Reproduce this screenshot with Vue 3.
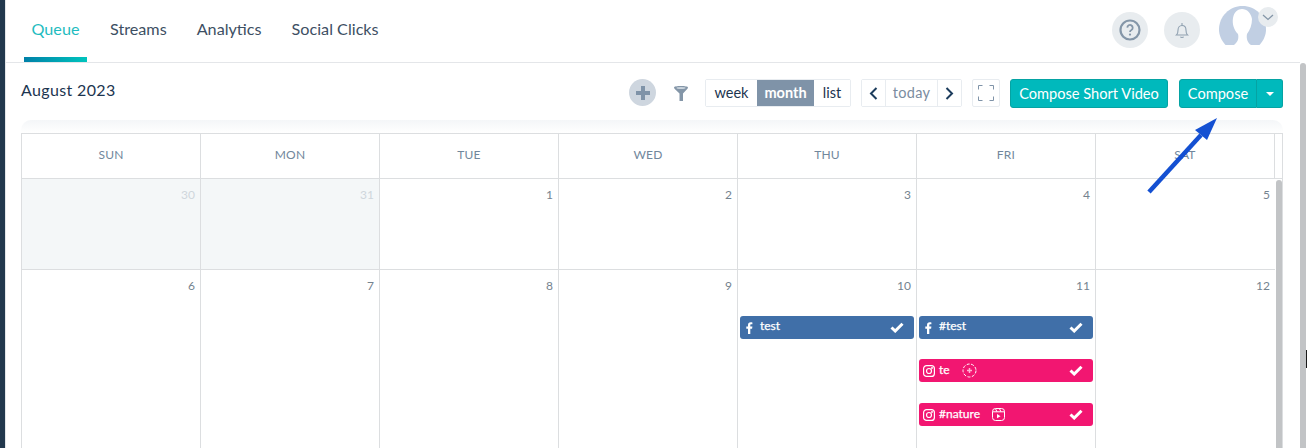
<script setup>
const heads = ['SUN', 'MON', 'TUE', 'WED', 'THU', 'FRI', 'SAT']
const weeks = [
  [
    { n: 30, off: true }, { n: 31, off: true }, { n: 1 }, { n: 2 }, { n: 3 }, { n: 4 }, { n: 5 },
  ],
  [
    { n: 6 }, { n: 7 }, { n: 8 }, { n: 9 },
    { n: 10, events: [{ kind: 'fb', label: 'test' }] },
    { n: 11, events: [
      { kind: 'fb', label: '#test' },
      { kind: 'ig', label: 'te', extra: 'story' },
      { kind: 'ig', label: '#nature', extra: 'reel' },
    ] },
    { n: 12 },
  ],
]
</script>

<template>
  <div class="page">
    <div class="rail"></div>
    <div class="main">
      <header class="topbar">
        <nav class="tabs">
          <a class="tab active">Queue</a>
          <a class="tab">Streams</a>
          <a class="tab">Analytics</a>
          <a class="tab">Social Clicks</a>
        </nav>
        <div class="user">
          <span class="round">
            <svg width="22" height="22" viewBox="0 0 22 22" fill="none" stroke="#8496a8" stroke-width="2.200">
              <circle cx="11" cy="11" r="9.500" />
              <path d="M8.300 8.600a2.700 2.700 0 1 1 4.100 2.400c-.9.500-1.400 1-1.400 2" stroke-width="1.800" />
              <circle cx="11" cy="15.600" r=".6" stroke-width="1.100" />
            </svg>
          </span>
          <span class="round">
            <svg width="14" height="17" viewBox="0 0 14 17" fill="none" stroke="#8fa0b0" stroke-width="1.100">
              <path d="M1.500 13c1.200-1 1.500-2.200 1.500-4.800C3 5.500 4.600 3.500 7 3.500s4 2 4 4.700c0 2.600.3 3.800 1.500 4.800z" />
              <path d="M7 1v2.500M5.400 14.800c.5.900 2.700.9 3.200 0" />
            </svg>
          </span>
          <span class="avatar">
            <svg width="47" height="39" viewBox="0 0 47 39">
              <path d="M6.500 39C2.500 34.500 0 29.500 0 23.500 0 10.500 10.500 0 23.500 0S47 10.500 47 23.500c0 6-2.500 11-6.500 15.500z" fill="#c1cfe3" />
              <path d="M15 39c4-3 5-7 4-11-4-4-6-10-5-16 1-6 5-9 9-9 5 0 9 4 10 10 0 6-2 11-5 15-1 5 1 9 4 11z" fill="#fff" />
            </svg>
            <span class="avatar-caret">
              <svg width="12" height="7" viewBox="0 0 12 7" fill="none" stroke="#8496a8" stroke-width="1.300"><path d="M1 1l5 4.500L11 1" /></svg>
            </span>
          </span>
        </div>
      </header>

      <section class="toolbar">
        <h2 class="month-title">August 2023</h2>
        <div class="tools">
          <span class="plus">
            <svg width="16" height="16" viewBox="0 0 16 16"><path d="M8 1v14M1 8h14" stroke="#7f93a8" stroke-width="4" /></svg>
          </span>
          <svg class="funnel" width="14" height="15" viewBox="0 0 14 15">
            <path d="M0 1.500C0 .5 3 0 7 0s7 .5 7 1.500c0 .5-.3 1-.8 1.400L9 7.500V15H5.500V7.500L.8 2.900C.3 2.500 0 2 0 1.500z" fill="#8496a8" />
            <ellipse cx="7" cy="2" rx="4.500" ry="1" fill="#c9d3dc" />
          </svg>
          <div class="btn-group views">
            <button class="seg seg-week">week</button>
            <button class="seg on">month</button>
            <button class="seg seg-list">list</button>
          </div>
          <div class="btn-group pager">
            <button class="seg arrow">
              <svg width="9" height="13" viewBox="0 0 9 13" fill="none" stroke="#1c3c5c" stroke-width="2"><path d="M7.500 1L2 6.500l5.500 5.500" /></svg>
            </button>
            <button class="seg today">today</button>
            <button class="seg arrow">
              <svg width="9" height="13" viewBox="0 0 9 13" fill="none" stroke="#1c3c5c" stroke-width="2"><path d="M1.500 1L7 6.500 1.500 12" /></svg>
            </button>
          </div>
          <button class="expand">
            <svg width="16" height="16" viewBox="0 0 16 16" fill="none" stroke="#7f93a8" stroke-width="1">
              <path d="M.5 4.500v-4h4M11.500.5h4v4M15.500 11.500v4h-4M4.500 15.500h-4v-4" />
            </svg>
          </button>
          <button class="teal short">Compose Short Video</button>
          <div class="split">
            <button class="teal main-act">Compose</button>
            <button class="teal caret-act"><span class="tri"></span></button>
          </div>
        </div>
      </section>

      <section class="calendar">
        <div class="shadow-strip"></div>
        <div class="cal-frame">
          <div class="cal-head">
            <div v-for="h in heads" :key="h" class="head-cell">{{ h }}</div>
            <div class="gutter"></div>
          </div>
          <div class="cal-body">
            <div class="weeks">
              <div v-for="(w, i) in weeks" :key="i" class="week">
                <div v-for="d in w" :key="d.n" class="day" :class="{ off: d.off }">
                  <div class="num">{{ d.n }}</div>
                  <div v-if="d.events" class="events">
                    <div v-for="e in d.events" :key="e.label" class="event" :class="e.kind">
                      <svg v-if="e.kind === 'fb'" class="net" width="7" height="12" viewBox="0 0 7 12"><path d="M2 12V6.700H.3V4.600H2V3.100C2 1.200 3 .3 4.700.3c.8 0 1.400.1 1.700.1v1.900h-1c-.9 0-1.100.4-1.100 1v1.300h2.100l-.3 2.100H4.300V12z" fill="#fff" /></svg>
                      <svg v-else class="net" width="12" height="12" viewBox="0 0 12 12" fill="none" stroke="#fff" stroke-width="1.200"><rect x=".6" y=".6" width="10.800" height="10.800" rx="3" /><circle cx="6" cy="6" r="2.500" /><circle cx="9" cy="3" r=".4" /></svg>
                      <span class="ev-label">{{ e.label }}</span>
                      <svg v-if="e.extra === 'story'" class="extra story" width="15" height="15" viewBox="0 0 15 15" fill="none" stroke="#fff"><circle cx="7.500" cy="7.500" r="6.500" stroke-dasharray="3 1.500" /><path d="M7.500 5v5M5 7.500h5" stroke="#ffb3d1" stroke-width="1.500" /></svg>
                      <svg v-if="e.extra === 'reel'" class="extra reel" width="13" height="13" viewBox="0 0 13 13" fill="none" stroke="#fff"><rect x=".5" y=".5" width="12" height="12" rx="3" /><path d="M.5 3.800h12M3.500.8l1.500 3M7.500.8l1.500 3" /><path d="M5 6l3.500 2.200L5 10.300z" fill="#fff" stroke="none" /></svg>
                      <svg class="check" width="14" height="11" viewBox="0 0 14 11"><path d="M1.500 5.500l3.700 3.500L12.500 1.800" fill="none" stroke="#fff" stroke-width="3" /></svg>
                    </div>
                  </div>
                </div>
              </div>
            </div>
            <div class="inner-scroll"><span class="inner-thumb"></span></div>
          </div>
        </div>
      </section>

      <svg class="pointer" width="78" height="86" viewBox="0 0 78 86">
        <path d="M3 77L55 20" stroke="#1450d2" stroke-width="4.500" fill="none" />
        <path d="M71 3L49 15 61 25z" fill="#1450d2" />
      </svg>
    </div>
    <div class="page-scroll"><span class="cursor-bit"></span></div>
  </div>
</template>

<style>
html, body { margin: 0; padding: 0; background: #fff; overflow: hidden; }
</style>

<style scoped>
.page {
  display: flex;
  width: 1307px;
  height: 448px;
  overflow: hidden;
  background: #fff;
  font-family: "Lato", "Open Sans", sans-serif;
  color: #1c3550;
}
.rail { width: 5px; background: #22384d; flex: none; }
.main {
  position: relative;
  flex: 1;
  min-width: 0;
  border-left: 1px solid #e3e6e9;
}
.topbar {
  display: flex;
  align-items: flex-start;
  justify-content: space-between;
  height: 62px;
  border-bottom: 1px solid #e4e6e9;
}
.tabs { display: flex; padding-left: 18px; }
.tab {
  position: relative;
  height: 62px;
  box-sizing: border-box;
  padding: 19px 7px 0;
  margin-right: 16px;
  font-size: 16.200px;
  line-height: 20px;
  color: #3d4f63;
}
.tab.active { color: #1fbcc0; padding-right: 7.500px; padding-left: 7.500px; }
.tab.active::after {
  content: "";
  position: absolute;
  left: 0;
  right: 0;
  bottom: 0;
  height: 5px;
  background: linear-gradient(90deg, #0080a8, #00c4bd);
}
.user {
  display: flex;
  align-items: flex-start;
  padding: 6px 34px 0 0;
}
.round {
  display: flex;
  align-items: center;
  justify-content: center;
  width: 36px;
  height: 36px;
  margin-top: 6px;
  margin-right: 16px;
  border-radius: 50%;
  background: #e8ecef;
}
.avatar { position: relative; width: 47px; height: 39px; margin-left: 3px; }
.avatar svg { display: block; }
.avatar-caret {
  position: absolute;
  right: -12px;
  top: 1px;
  display: flex;
  align-items: center;
  justify-content: center;
  width: 20px;
  height: 20px;
  border-radius: 50%;
  background: #e8ecef;
}
.toolbar {
  display: flex;
  align-items: flex-start;
  justify-content: space-between;
  height: 57px;
  padding: 0 17px 0 15px;
}
.month-title {
  margin: 17px 0 0;
  font-size: 16px;
  line-height: 20px;
  font-weight: 400;
  color: #1c3550;
  letter-spacing: .36px;
}
.tools { display: flex; align-items: flex-start; padding-top: 16px; }
.plus {
  display: flex;
  align-items: center;
  justify-content: center;
  width: 27px;
  height: 27px;
  margin-right: 18px;
  border-radius: 50%;
  background: #ced6df;
}
.funnel { margin: 7px 17px 0 0; }
.btn-group {
  display: flex;
  height: 28px;
  box-sizing: border-box;
  border: 1px solid #e8ecf0;
  border-radius: 2px;
}
.views, .pager { margin-right: 10px; }
.seg {
  padding: 0;
  border: 0;
  background: #fff;
  font: inherit;
  font-size: 14.500px;
  line-height: 26px;
  color: #1c3550;
}
.seg-week { width: 51px; }
.seg-list { width: 36px; }
.seg.on { width: 57px; background: #7f93a8; color: #fff; font-weight: 700; }
.seg.arrow {
  display: flex;
  align-items: center;
  justify-content: center;
  width: 23px;
}
.seg.today {
  width: 53px;
  color: #7a8ca0;
  border-left: 1px solid #e8ecf0;
  border-right: 1px solid #e8ecf0;
  letter-spacing: .3px;
}
.expand {
  display: flex;
  align-items: center;
  justify-content: center;
  width: 28px;
  height: 28px;
  margin-right: 10px;
  padding: 0;
  background: #fff;
  border: 1px solid #e8ecf0;
  border-radius: 2px;
}
.teal {
  height: 29px;
  border: 1px solid #05a3a3;
  background: #00b9bc;
  color: #fff;
  font: inherit;
  font-size: 14.600px;
  padding: 0;
}
.short { width: 158px; margin-right: 11px; border-radius: 3px; }
.split { display: flex; }
.main-act { width: 78px; border-radius: 3px 0 0 3px; }
.caret-act {
  display: flex;
  align-items: center;
  justify-content: center;
  width: 26px;
  border-left: 0;
  border-radius: 0 3px 3px 0;
}
.tri {
  width: 0;
  height: 0;
  border-left: 4px solid transparent;
  border-right: 4px solid transparent;
  border-top: 4px solid #fff;
}
.calendar { position: relative; padding: 13px 17px 0 15px; }
.shadow-strip {
  position: absolute;
  left: 15px;
  right: 17px;
  top: 0;
  height: 13px;
  background: linear-gradient(#f4f6f8, #fff);
  border-radius: 10px 10px 0 0;
}
.cal-frame {
  position: relative;
  border: 1px solid #dcdee0;
  border-bottom: 0;
}
.cal-head { display: grid; grid-template-columns: repeat(7, 179px) 1fr; height: 44px; border-bottom: 1px solid #dcdee0; }
.head-cell {
  border-right: 1px solid #dcdee0;
  text-align: center;
  font-size: 12px;
  line-height: 42px;
  color: #71879c;
  letter-spacing: .2px;
}
.cal-body { display: flex; }
.weeks { width: 1253px; flex: none; }
.week {
  display: grid;
  grid-template-columns: repeat(7, 179px);
  height: 91px;
  border-bottom: 1px solid #dcdee0;
  box-sizing: border-box;
}
.week:last-child { height: 200px; }
.day { border-right: 1px solid #dcdee0; }
.day:last-child { border-right: 0; }
.day.off { background: #f4f7f8; }
.num {
  padding: 8px 5px 0 0;
  text-align: right;
  font-size: 12px;
  line-height: 16px;
  color: #75838f;
}
.off .num { color: #cfd6dc; }
.events { display: flex; flex-direction: column; gap: 20px; padding: 22px 2px 0 2px; }
.event {
  display: flex;
  align-items: center;
  height: 23px;
  border-radius: 3px;
  color: #fff;
  font-size: 12px;
  padding: 0 9px 0 6px;
  -webkit-text-stroke: .25px #fff;
}
.event:nth-child(3) { margin-top: 1px; }
.event.fb { background: #406fa8; }
.event.ig { background: #f21671; padding-left: 4px; }
.net { flex: none; }
.ev-label { margin-left: 4px; line-height: 20px; padding-bottom: 2px; }
.fb .ev-label { margin-left: 7px; padding-bottom: 4px; }
.extra { margin-left: 12px; }
.check { margin-left: auto; margin-right: 1px; }
.inner-scroll { flex: 1; position: relative; padding: 1px 0 0 1px; }
.inner-thumb {
  display: block;
  width: 6px;
  height: 400px;
  border-radius: 3px 3px 0 0;
  background: #c2c4c6;
}
.pointer {
  position: absolute;
  left: 1140px;
  top: 115px;
}
.page-scroll {
  position: relative;
  flex: none;
  width: 7px;
  padding-top: 63px;
  box-sizing: border-box;
}
.page-scroll::before {
  content: "";
  display: block;
  width: 6px;
  height: 385px;
  background: #c2c4c6;
  border-radius: 3px 3px 0 0;
}
.cursor-bit {
  position: absolute;
  right: 0;
  top: 350px;
  width: 1px;
  height: 18px;
  background: #1a1a1a;
}
</style>
